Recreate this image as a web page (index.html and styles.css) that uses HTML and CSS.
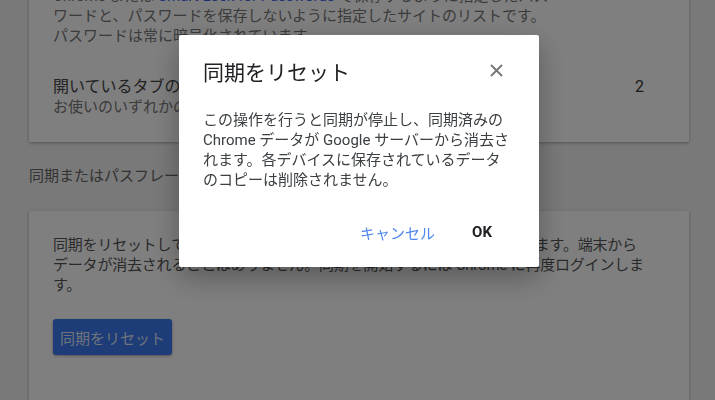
FILE: index.html
```html
<!DOCTYPE html>
<html lang="ja">
<head>
    <meta charset="UTF-8">
    <meta name="viewport" content="width=device-width, initial-scale=1.0">
    <title>Chrome 同期</title>
    <link rel="stylesheet" href="styles.css">
</head>
<body>
    <main class="page">
        <section class="card">
            <p class="card-desc">
                Chrome または <a href="#">Smart Lock for Passwords</a> で保存するように指定したパスワードと、パスワードを保存しないように指定したサイトのリストです。<br>
                パスワードは常に暗号化されています。
            </p>
            <div class="data-row">
                <div class="row-text">
                    <div class="row-title">開いているタブのグループ</div>
                    <div class="row-sub">お使いのいずれかのデバイスで開いているタブ</div>
                </div>
                <span class="row-count">2</span>
            </div>
        </section>

        <h2 class="section-title">同期またはパスフレーズのリセット</h2>

        <section class="card card-reset">
            <p class="reset-text">同期をリセットしてデータを Google サーバーから削除し、同期を停止します。端末からデータが消去されることはありません。同期を開始するには Chrome に再度ログインします。</p>
            <button class="btn-primary">同期をリセット</button>
        </section>
    </main>

    <!-- Reset dialog -->
    <div class="overlay">
        <div class="dialog">
            <div class="dialog-header">
                <h3 class="dialog-title">同期をリセット</h3>
                <button class="dialog-close" aria-label="閉じる">
                    <svg width="13" height="13" viewBox="0 0 13 13">
                        <path d="M1 1 L12 12 M12 1 L1 12" stroke="#757575" stroke-width="1.8" fill="none"/>
                    </svg>
                </button>
            </div>
            <p class="dialog-body">この操作を行うと同期が停止し、同期済みの Chrome データが Google サーバーから消去されます。各デバイスに保存されているデータのコピーは削除されません。</p>
            <div class="dialog-actions">
                <button class="btn-text btn-cancel">キャンセル</button>
                <button class="btn-text btn-ok">OK</button>
            </div>
        </div>
    </div>
</body>
</html>
```

FILE: styles.css
```css
body {
    margin: 0;
    font-family: Roboto, "Noto Sans CJK JP", sans-serif;
    font-size: 15px;
    line-height: 20px;
    background-color: #f2f2f2;
    color: #444;
    overflow: hidden;
}

.page {
    width: 660px;
    margin: -38px 0 0 29px;
}

.card {
    background-color: #fff;
    padding: 24px 24px 25px;
    box-shadow: 0 1px 3px rgba(0, 0, 0, 0.3);
}

.card-desc {
    margin: 0;
    max-width: 510px;
    color: #777;
}

.card-desc a {
    color: #4060e8;
    text-decoration: none;
}

.data-row {
    display: flex;
    align-items: flex-start;
    justify-content: space-between;
    margin-top: 31px;
}

.row-title {
    font-size: 16px;
    color: #444;
}

.row-sub {
    color: #777;
}

.row-count {
    font-size: 16px;
    color: #333;
    margin-right: 21px;
}

.section-title {
    margin: 24px 0 25px;
    font-size: 15px;
    font-weight: normal;
    line-height: 20px;
    color: #666;
}

.card-reset {
    padding-bottom: 60px;
}

.reset-text {
    margin: 0 0 24px;
    color: #555;
    letter-spacing: -0.2px;
    line-break: strict;
}

.btn-primary {
    height: 36px;
    padding: 0 7px;
    font-family: inherit;
    font-size: 15px;
    color: #dfe6f5;
    background-color: #3b78f0;
    border: none;
    border-radius: 3px;
    box-shadow: 0 1px 3px rgba(0, 0, 0, 0.35);
    cursor: pointer;
}

.overlay {
    position: fixed;
    top: 0;
    left: 0;
    width: 100%;
    height: 100%;
    background-color: rgba(0, 0, 0, 0.5);
    display: flex;
    justify-content: center;
    align-items: flex-start;
    padding: 35px 0 0 3px;
    box-sizing: border-box;
}

.dialog {
    width: 360px;
    background-color: #fff;
    border-radius: 2px;
    box-shadow: 0 10px 28px rgba(0, 0, 0, 0.3);
}

.dialog-header {
    display: flex;
    justify-content: space-between;
    align-items: flex-start;
    padding: 24px 36px 0 24px;
}

.dialog-title {
    margin: 0;
    font-size: 21px;
    font-weight: normal;
    line-height: 28px;
    color: #202124;
}

.dialog-close {
    margin-top: 5px;
    padding: 0;
    width: 13px;
    height: 13px;
    border: none;
    background: none;
    cursor: pointer;
}

.dialog-close svg {
    display: block;
}

.dialog-body {
    margin: 0;
    padding: 23px 24px 0;
    color: #3c4043;
}

.dialog-actions {
    display: flex;
    justify-content: flex-end;
    padding: 24px 27px 17px 24px;
}

.btn-text {
    height: 36px;
    padding: 0 20px;
    font-family: inherit;
    font-size: 15px;
    background: none;
    border: none;
    cursor: pointer;
}

.btn-cancel {
    color: #4f87ef;
    margin-right: -3px;
}

.btn-ok {
    color: #202124;
    font-weight: bold;
}
```
